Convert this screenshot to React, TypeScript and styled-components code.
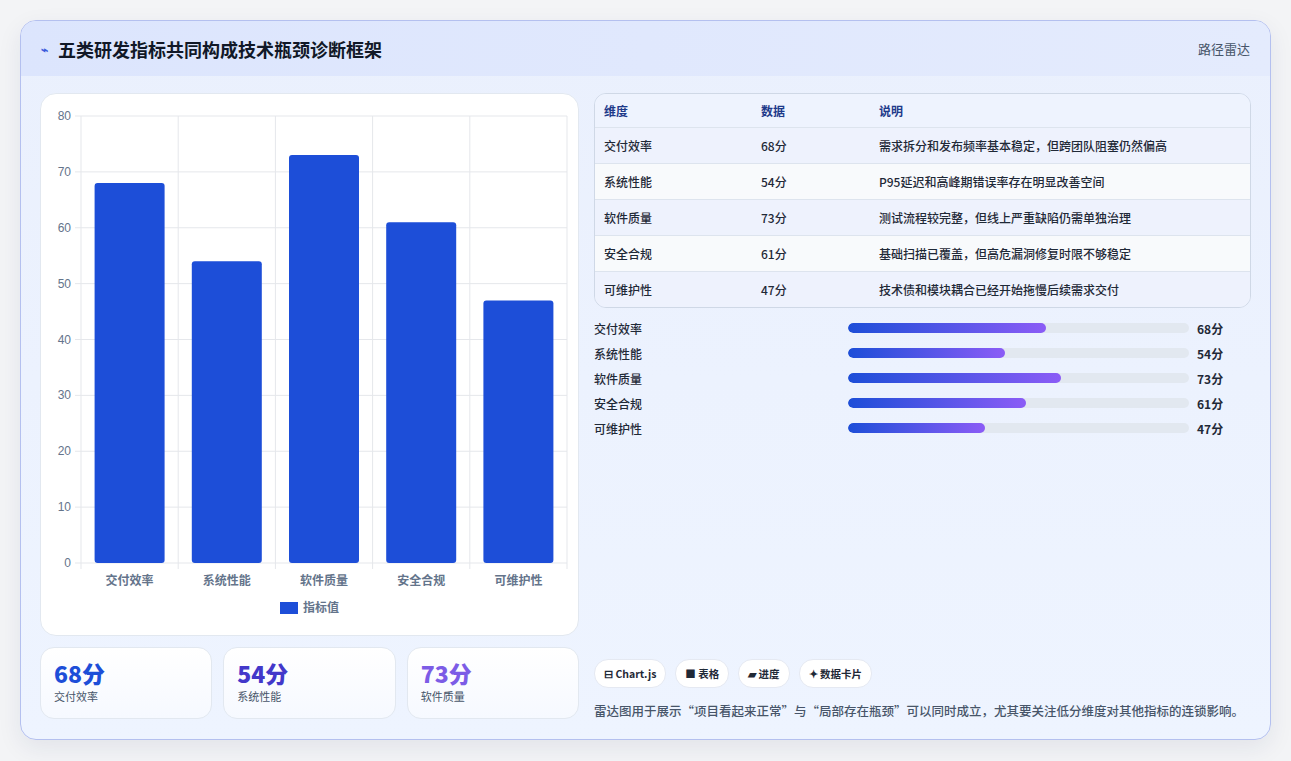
import styled, { createGlobalStyle } from 'styled-components';

const Global = createGlobalStyle`
  body {
    margin: 0;
    background: #f3f4f6;
    font-family: "Noto Sans CJK SC", "Noto Sans", sans-serif;
  }
`;

const Page = styled.div`
  width: 1291px;
  height: 761px;
  padding: 20px;
  box-sizing: border-box;
`;

const Frame = styled.div`
  width: 1251px;
  height: 720px;
  box-sizing: border-box;
  border: 1px solid #b4c0ef;
  border-radius: 16px;
  background: linear-gradient(180deg, #eaf0fd 0%, #eef4ff 100%);
  overflow: hidden;
  box-shadow: 0 8px 24px rgba(30, 41, 90, 0.08);
  display: flex;
  flex-direction: column;
`;

const Header = styled.div`
  height: 55px;
  display: flex;
  align-items: center;
  justify-content: space-between;
  padding: 0 20px 0 20px;
  background: linear-gradient(90deg, #dce5fd, #e4ebfd);
`;

const Title = styled.h1`
  margin: 0;
  font-size: 18px;
  font-weight: 700;
  color: #111827;
  display: flex;
  align-items: center;
  gap: 10px;
`;

const Spark = styled.span`
  color: #3b5bdb;
  font-size: 12px;
`;

const HeadRight = styled.span`
  font-size: 13px;
  color: #475569;
`;

const Body = styled.div`
  flex: 1;
  display: grid;
  grid-template-columns: 539px 657px;
  gap: 15px;
  padding: 17px 19px 19px 19px;
`;

const Left = styled.div`
  display: flex;
  flex-direction: column;
  gap: 11px;
`;

const ChartCard = styled.div`
  height: 543px;
  box-sizing: border-box;
  background: #fff;
  border: 1px solid #e2e8f0;
  border-radius: 16px;
`;

const Stats = styled.div`
  display: grid;
  grid-template-columns: repeat(3, 1fr);
  gap: 11px;
`;

const Stat = styled.div`
  height: 72px;
  box-sizing: border-box;
  border: 1px solid #e2e8f0;
  border-radius: 14px;
  background: linear-gradient(180deg, #ffffff, #f6f9ff);
  padding: 10px 13px;
`;

const StatValue = styled.div<{ $color: string }>`
  font-size: 23px;
  font-weight: 800;
  color: ${p => p.$color};
  line-height: 30px;
`;

const StatLabel = styled.div`
  font-size: 11px;
  color: #475569;
`;

const Right = styled.div`
  display: flex;
  flex-direction: column;
`;

const Table = styled.div`
  border: 1px solid #cfd8e6;
  border-radius: 12px;
  overflow: hidden;
`;

const Row = styled.div<{ $bg: string; $head?: boolean }>`
  display: grid;
  grid-template-columns: 157px 118px 1fr;
  height: ${p => (p.$head ? 33 : 35)}px;
  align-items: center;
  padding-left: 9px;
  background: ${p => p.$bg};
  border-top: ${p => (p.$head ? 'none' : '1px solid #dde4ee')};
  font-size: 12px;
  color: ${p => (p.$head ? '#1e3a8a' : '#1f2937')};
  font-weight: ${p => (p.$head ? 700 : 500)};
`;

const Bars = styled.div`
  margin-top: 11px;
  display: flex;
  flex-direction: column;
  gap: 7px;
`;

const BarRow = styled.div`
  display: grid;
  grid-template-columns: 246px 341px auto;
  align-items: center;
  gap: 8px;
  height: 18px;
  font-size: 12px;
  color: #1f2937;
  font-weight: 500;
`;

const Track = styled.div`
  height: 10px;
  border-radius: 5px;
  background: #e2e8f0;
  overflow: hidden;
`;

const Fill = styled.div`
  height: 100%;
  border-radius: 5px;
  background: linear-gradient(90deg, #1d4ed8, #8b5cf6);
`;

const Num = styled.span`
  font-weight: 700;
  margin-left: 0;
`;

const Spacer = styled.div`
  flex: 1;
`;

const Chips = styled.div`
  display: flex;
  gap: 9px;
`;

const Chip = styled.span`
  height: 27px;
  padding: 0 9px;
  border-radius: 14px;
  background: #fff;
  border: 1px solid #e5e9f2;
  display: flex;
  align-items: center;
  font-size: 10.5px;
  font-weight: 600;
  color: #1f2937;
`;

const Note = styled.p`
  margin: 13px 0 0 0;
  font-size: 12.5px;
  color: #475569;
  font-weight: 500;
`;

const data = [
  { name: '交付效率', v: 68, note: '需求拆分和发布频率基本稳定，但跨团队阻塞仍然偏高' },
  { name: '系统性能', v: 54, note: 'P95延迟和高峰期错误率存在明显改善空间' },
  { name: '软件质量', v: 73, note: '测试流程较完整，但线上严重缺陷仍需单独治理' },
  { name: '安全合规', v: 61, note: '基础扫描已覆盖，但高危漏洞修复时限不够稳定' },
  { name: '可维护性', v: 47, note: '技术债和模块耦合已经开始拖慢后续需求交付' },
];

function Chart() {
  const x0 = 40, x1 = 526, yTop = 22, yBot = 469;
  const h = yBot - yTop;
  const step = (x1 - x0) / 5;
  const font = '"Liberation Sans", "Noto Sans CJK SC", sans-serif';
  return (
    <svg width="537" height="541">
      {[0, 10, 20, 30, 40, 50, 60, 70, 80].map(t => {
        const y = yBot - (t / 80) * h;
        return (
          <g key={t}>
            <line x1={x0 - 6} x2={x1} y1={y} y2={y} stroke="#e5e7eb" />
            <text x={x0 - 10} y={y + 4} fontSize="12" fill="#64748b" textAnchor="end" fontFamily={font}>{t}</text>
          </g>
        );
      })}
      {[0, 1, 2, 3, 4, 5].map(i => (
        <line key={i} x1={x0 + i * step} x2={x0 + i * step} y1={yTop} y2={yBot + 6} stroke="#e5e7eb" />
      ))}
      {data.map((d, i) => {
        const bh = (d.v / 80) * h;
        const cx = x0 + step * i + step / 2;
        return (
          <g key={d.name}>
            <rect x={cx - 35} y={yBot - bh} width="70" height={bh} rx="3" fill="#1d4ed8" />
            <text x={cx} y={yBot + 22} fontSize="12" fontWeight="600" fill="#64748b" textAnchor="middle" fontFamily={font}>{d.name}</text>
          </g>
        );
      })}
      <rect x="239" y="508" width="18" height="12" fill="#1d4ed8" />
      <text x="262" y="518" fontSize="12" fontWeight="600" fill="#64748b" fontFamily={font}>指标值</text>
    </svg>
  );
}

export default function App() {
  return (
    <Page>
      <Global />
      <Frame>
        <Header>
          <Title><Spark>⌁</Spark>五类研发指标共同构成技术瓶颈诊断框架</Title>
          <HeadRight>路径雷达</HeadRight>
        </Header>
        <Body>
          <Left>
            <ChartCard><Chart /></ChartCard>
            <Stats>
              <Stat><StatValue $color="#1d4ed8">68分</StatValue><StatLabel>交付效率</StatLabel></Stat>
              <Stat><StatValue $color="#4338ca">54分</StatValue><StatLabel>系统性能</StatLabel></Stat>
              <Stat><StatValue $color="#7c5ce6">73分</StatValue><StatLabel>软件质量</StatLabel></Stat>
            </Stats>
          </Left>
          <Right>
            <Table>
              <Row $head $bg="#eef3fe"><span>维度</span><span>数据</span><span>说明</span></Row>
              {data.map((d, i) => (
                <Row key={d.name} $bg={i % 2 === 0 ? '#eef2fd' : '#f8fafc'}>
                  <span>{d.name}</span><span>{d.v}分</span><span>{d.note}</span>
                </Row>
              ))}
            </Table>
            <Bars>
              {data.map(d => (
                <BarRow key={d.name}>
                  <span>{d.name}</span>
                  <Track><Fill style={{ width: `${d.v * 0.855}%` }} /></Track>
                  <Num>{d.v}分</Num>
                </BarRow>
              ))}
            </Bars>
            <Spacer />
            <Chips>
              <Chip>⊟ Chart.js</Chip>
              <Chip>■ 表格</Chip>
              <Chip>▰ 进度</Chip>
              <Chip>✦ 数据卡片</Chip>
            </Chips>
            <Note>雷达图用于展示“项目看起来正常”与“局部存在瓶颈”可以同时成立，尤其要关注低分维度对其他指标的连锁影响。</Note>
          </Right>
        </Body>
      </Frame>
    </Page>
  );
}
